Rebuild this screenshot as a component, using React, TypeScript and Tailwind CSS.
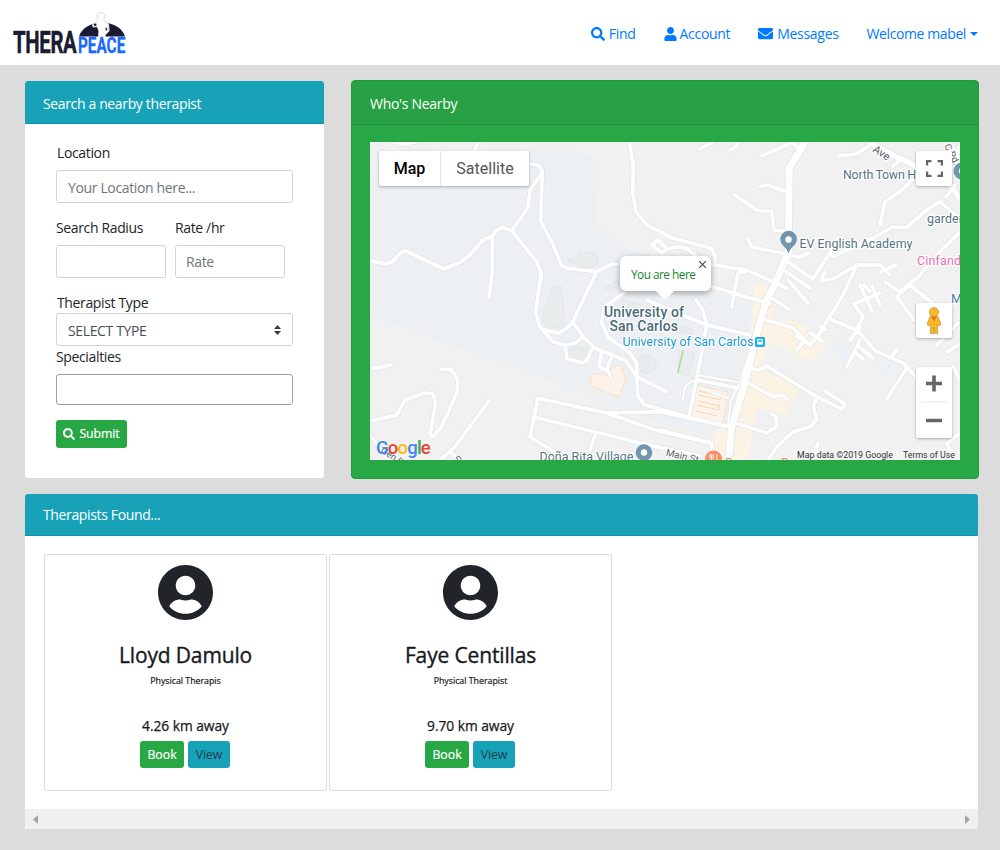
import React from "react";
import { FaSearch, FaUser, FaEnvelope, FaUserCircle } from "react-icons/fa";

const minorRoads = [
  "M370 261 L385 263.7 L391.7 262.3 L401.7 251.7 L405.7 251 L444 269 L460 262.3 L470 255 L482.3 240.7 L492.3 236 L495 231.7 L502.3 227.3 L511.7 230.7 L536.7 261.7 L541.7 275 L539 290",
  "M596.7 271.7 L572.3 322.7 L566.7 328.3 L558.3 333.3 L545 330",
  "M492.3 236 L492.3 272 L489 297",
  "M511.7 230.7 L527.7 208.3 L530 190 L542.3 172.3",
  "M520 163 L538.3 165 L542.3 171 L540.7 221.7 L553.3 245 L561.7 265.7 L566.7 268.3 L596.7 271.7 L611.7 264 L625 265",
  "M541 272 L535.5 313 L540 326.7 L553 341.7 L565 345 L575 343.3 L583 336.7",
  "M572.3 321.7 L583.3 336.7 L595 348.3 L625 360 L636.7 376.7 L666.5 391.7",
  "M629.5 142 L633.3 165 L632.7 193.3 L636 211.7 L646.7 225 L673 238.3 L711.7 248.3 L715 256.7 L715 262",
  "M700 263 L746.7 270 L786.7 288",
  "M746 272 L738 273 L731.7 306.7",
  "M710 286 L733 293 L770 304",
  "M661.7 253 L651.7 245 L658 240 L667 249 L661.7 253",
  "M667 249 L678 246.7 L686 248 L697 257",
  "M700 149 L713 142",
  "M730 150 L737 146 L738 141",
  "M761.7 156 L790 143.3",
  "M792 142 L800 150",
  "M760 186.7 L768 185 L786 191.7",
  "M735 195 L756.7 210 L771.7 211.7 L774 230 L785 231.5",
  "M747.3 238 L751.7 247 L786.7 254 L799 257.5 L808.5 253",
  "M788 261.7 L813 279 L830 253 L833 256.7 L873 238 L893 226.7 L906.7 227.7 L926.7 210 L940 201.7 L962 221",
  "M830 253 L838 238",
  "M838 155.7 L856.7 154 L870 145",
  "M880 225 L885 201.7 L900 191.7 L914 178",
  "M786 271.7 L810 288",
  "M821 281 L825 272",
  "M821 281 L833 279 L856.7 265 L880 265 L890 275",
  "M880 272 L896 265",
  "M864 285 L870 292",
  "M856.7 265 L843 295 L820 333 L810 345 L793 328 L766.7 320",
  "M960 231.7 L936.7 255 L920 275 L900 291.7 L885 282",
  "M796.7 350 L805 340",
  "M810 345 L796 336",
  "M810 333 L822 341",
  "M820 326 L826 330",
  "M831.7 320 L856.7 330 L876.7 351.7 L903 363 L917 378",
  "M906.7 368 L886.7 399",
  "M860 340 L846.7 366.7",
  "M858 346 L873 358",
  "M856 353 L864 360",
  "M890 358 L897 350",
  "M860 328 L850 340",
  "M854 304 L863 316.7 L856 332",
  "M854 304 L880 293",
  "M860 285 L872 311",
  "M872 286 L880 305",
  "M788 280 L808 303",
  "M773 299 L788 309",
  "M750 368 L758 370 L766.7 366 L816.7 396.7 L841.7 409 L845 404 L825 391",
  "M748 383 L773 396.7 L781.7 395 L788 400",
  "M816.7 396.7 L813.5 406.7 L816.7 420 L810 426.7 L793 431.7 L776.7 446.7 L768 460",
  "M738 424 L766.7 433 L776.7 426.7 L776 417 L771.7 414",
  "M818 443 L813 457",
  "M711 460 L712 443 L660 430 M730 427 L660 411.7 L606.7 413",
  "M710 443 L655 430 L606.7 413 L538 398.3 L530 436.7 L538 442 L562 456",
  "M533 416.7 L640 443 L700 456",
  "M595 435 L590 450",
  "M636.7 376.7 L638 396.7 L645 405 L686.7 416.7 L731 427",
  "M696 300 L703 310 L706.7 325 L750 335",
  "M646.7 300 L706.7 325 L697 377 L689 416.7",
  "M697 380 L738 388",
  "M625 292 L604 307 L601.7 323 L608 336.7 L630 353 L636.7 363 L636.7 376.7",
  "M565 345 L567 359 L583 363 L587 360 L591.7 350",
  "M601.7 351.7 L599 366.7 L605 370",
  "M611.7 356.7 L606.7 369 L610.7 376",
  "M370 369 L391 365",
  "M441.7 369 L451.7 370 L458 380 L456.7 393 L441.7 426.7 L433 436.7 L430 434 L435.7 403 L433 394 L425 393 L405 400 L396.7 415 L370 421",
  "M489 400.7 L455 446.7 L440 460",
  "M450 451 L460 462",
  "M370 435 L388 460",
  "M896.7 296.7 L910 285 L936 306",
  "M896.7 296.7 L914 320",
  "M936.7 345 L958 323",
  "M947 352 L962 343",
  "M953 366.7 L962 384",
  "M962 432 L947 443 L951 452",
  "M955 185 L946 197",
  "M893 166 L902 158",
  "M394 142 L403 144 L416 142",
  "M475 150 L478 142",
];

const thinRoads = [
  "M697 380 L692 381 L685 386.7 L682.7 399",
  "M697 375 L737 382",
  "M753 343 L740 382 L731 400 L728 424",
  "M757 343 L744 386",
  "M700 388 L728 398",
];

const majorRoads = [
  "M806 140 L789.3 168.3 L788.3 252 L775 284 L766.7 300 L755 340 L746.7 376.7 L731.7 426.7 L728 465",
];

const midRoads = ["M866 140 L893 155 L917 166.7 L950 185 L962 202", "M962 142 L953 170"];

function MapCanvas() {
  return (
    <svg
      width="590"
      height="318"
      viewBox="370 142 590 318"
      className="block"
      fontFamily="Roboto, sans-serif"
      fill="none"
      strokeLinejoin="round"
      strokeLinecap="round"
    >
      <rect x="370" y="142" width="590" height="318" fill="#f1f1f1" />
      <path
        d="M370 175 L400 150 L563 147 L590 157 L598 167 L597 222 L610 237 L630 250 L655 258 L700 285 L750 310 L757 335 L745 380 L732 425 L712 433 L645 417 L552 381 L370 315 Z"
        fill="#ecf0f3"
      />
      <path d="M835 340 L853 346 L850 360 L832 350Z M880 362 L897 358 L884 380Z" fill="#edf1f5" />
      <path
        d="M755 282 L778 291 L772 318 L798 322 L828 341 L812 362 L770 342 L760 368 L800 388 L785 414 L756 410 L748 460 L712 460 L714 432 L728 424 L742 372 L750 335Z"
        fill="#fbf4e5"
      />
      <g fill="#e9ecec" stroke="#e0e3e3" strokeWidth="0.8">
        <path d="M553 286 L561 286 L564 312 L563 328 L545 326 L542 318Z" />
        <path d="M568 260 L577 257 L579 253 L590 252 L597 256 L599 261 L594 267 L580 266 L579 263 L570 263Z" />
        <path d="M569 349 L577 346 L586 350 L586 359 L577 363 L569 360Z" />
        <path d="M640 357 L648 354 L656 360 L656 369 L648 374 L638 370Z" />
        <path d="M680 350 L695 352 L689 376 L678 373Z" />
        <path d="M605 288 L616 281 L620 284 L611 291Z" />
        <path d="M622 300 L641 305 L638 313 L622 310Z" />
        <path d="M680 326 L693 329 L692 334 L680 332Z" />
      </g>
      <path d="M683 351 L678 372" stroke="#a8dba0" strokeWidth="1.5" />
      <g fill="#fef3ea" stroke="#fbdfc5" strokeWidth="1">
        <path d="M592 374 L606 375 L611 378 L610 369 L620 365 L626 379 L619 397 L590 386Z" />
        <path d="M697 385 L728 392 L723 424 L691 416Z" />
        <path d="M699 391 L722 396 L721 400 L698 395 M698 401 L720 406 L719 410 L697 405 M696 411 L717 416" stroke="#f9d5b3" />
      </g>
      <g stroke="#e4e6e8" strokeWidth="5.2">
        {minorRoads.map((d) => (
          <path key={d} d={d} />
        ))}
      </g>
      <g stroke="#e2e4e6" strokeWidth="3.4">
        {thinRoads.map((d) => (
          <path key={d} d={d} />
        ))}
      </g>
      <g stroke="#e2e4e6" strokeWidth="8.5">
        {majorRoads.map((d) => (
          <path key={d} d={d} />
        ))}
      </g>
      <g stroke="#e2e4e6" strokeWidth="7">
        {midRoads.map((d) => (
          <path key={d} d={d} />
        ))}
      </g>
      <g stroke="#ffffff" strokeWidth="3.6">
        {minorRoads.map((d) => (
          <path key={d} d={d} />
        ))}
      </g>
      <g stroke="#ffffff" strokeWidth="2">
        {thinRoads.map((d) => (
          <path key={d} d={d} />
        ))}
      </g>
      <g stroke="#ffffff" strokeWidth="7">
        {majorRoads.map((d) => (
          <path key={d} d={d} />
        ))}
      </g>
      <g stroke="#ffffff" strokeWidth="5.4">
        {midRoads.map((d) => (
          <path key={d} d={d} />
        ))}
      </g>

      <g stroke="none">
        <g stroke="#ffffff" strokeWidth="2.4" paintOrder="stroke" fill="#55747f" fontSize="12.5">
          <text x="843" y="179" textLength="80">North Town Ho</text>
          <text x="799.5" y="247.5" textLength="113">EV English Academy</text>
          <text x="927" y="223" textLength="45">gardens</text>
          <text x="539.5" y="461" textLength="94">Doña Rita Village</text>
          <text x="917" y="264.5" fill="#e86cb3" textLength="54">Cinfandel</text>
          <text x="951" y="303" fill="#4a7ab5">Me</text>
          <text x="604" y="317" fontSize="14" fontWeight="500" fill="#4a6b79" textLength="80">University of</text>
          <text x="609.5" y="331" fontSize="14" fontWeight="500" fill="#4a6b79" textLength="68.5">San Carlos</text>
          <text x="622.5" y="346" fill="#1b96d2" textLength="131">University of San Carlos</text>
          <text x="725" y="467" fill="#e8865a">Burger</text>
          <text x="781" y="467" fill="#e8865a">B</text>
        </g>
        <g fill="#5c6066" fontSize="10" stroke="#ffffff" strokeWidth="2" paintOrder="stroke">
          <text transform="translate(665.5 455.5) rotate(13)" fontSize="9.8" xmlSpace="preserve">Main St</text>
          <text transform="translate(872 151) rotate(33)" fontSize="11">Ave</text>
          <text transform="translate(865 139) rotate(45)" fontSize="11">n</text>
          <text transform="translate(944 146) rotate(62)" fontSize="9.5">C Pd.</text>
          <text transform="translate(380 452) rotate(33)" fontSize="9.5">Gen Pa</text>
          <text transform="translate(458 462) rotate(-35)" fontSize="9.5">n</text>
        </g>
        <path d="M788.5 254 C787.5 247 780.3 246 780.3 239 A8.3 8.3 0 0 1 796.9 239 C796.9 246 789.5 247 788.5 254Z" fill="#7296ad" />
        <circle cx="788.5" cy="239.5" r="3.2" fill="#ffffff" />
        <circle cx="644" cy="452.5" r="8.3" fill="#7296ad" />
        <circle cx="644" cy="452.5" r="3.2" fill="#ffffff" />
        <circle cx="962" cy="171" r="8.5" fill="#7296ad" />
        <circle cx="962" cy="171" r="3.2" fill="#ffffff" />
        <circle cx="713.5" cy="459" r="8.5" fill="#f9906a" />
        <path d="M710 454.5v4M711.7 454.5v4M713.4 454.5v4M711.7 458v4M717 454.5v8" stroke="#ffffff" strokeWidth="0.9" />
        <rect x="755" y="337" width="10" height="10" rx="1.5" fill="#18b0ee" />
        <path d="M757.2 339h5.6v5.6h-5.6z" fill="#ffffff" />
        <path d="M758 340.2h4v1.6h-4z M757.5 345h1.2v1h-1.2z M761.3 345h1.2v1h-1.2z" fill="#18b0ee" />
        <path d="M792 449 H960 V460 H792Z" fill="#f5f5f5" fillOpacity="0.7" />
      </g>
    </svg>
  );
}

function Logo() {
  return (
    <svg width="120" height="52" viewBox="12 11 120 52" className="block" fontFamily="Roboto, sans-serif" fontWeight="700">
      <path d="M79 36.5 C81 29 90 22.5 102 22.5 C114 22.5 123 29 125 36.5Z" fill="#1b1b31" />
      <path d="M97 21.5 L104 21 L109 24 L109.5 31 L105.5 35 L105.5 39 L98 39 L98.5 31 L97 27 L93 27.5 L92 25Z" fill="#ffffff" />
      <path d="M98.5 20 C96.5 16 97 13 101 12.6 C105.5 12.8 106 17 103 20.5 M98 21.5 C94 22 92 24.5 93 26.5 L97 26 M104.5 21 C108.5 22 109 27 108.5 31" fill="none" stroke="#cfcfd4" strokeWidth="0.8" />
      <circle cx="95.2" cy="24.7" r="1.3" fill="#1b1b31" />
      <path d="M105.5 27 l2 2 l-1.6 2.4z" fill="#1b1b31" />
      <path d="M88 52 l6 1 4-3 M108 39 l12 2 4 4 M112 51 l8 1" fill="none" stroke="#d5d5da" strokeWidth="0.8" />
      <text transform="translate(13 53.3) scale(0.656 1)" fontSize="31" fill="#1b1b31" stroke="#1b1b31" strokeWidth="0.5" textLength="96.8">THERA</text>
      <text transform="translate(78 53.3) scale(0.679 1)" fontSize="22.5" fill="#1769ff" stroke="#1769ff" strokeWidth="0.3" textLength="69.2">PEACE</text>
    </svg>
  );
}

function TherapistCard({ name, role, distance }: { name: string; role: string; distance: string }) {
  return (
    <div className="flex h-[237px] w-[283px] flex-col items-center rounded-[3px] border border-[#dcdcdc] bg-white pt-[9px] text-[#16191c]">
      <FaUserCircle className="h-[57px] w-[55px] text-[#212529]" />
      <div className="mt-[19px] h-[30px] text-[21px] leading-[30px] tracking-[-0.15px] whitespace-nowrap [-webkit-text-stroke:0.35px]">{name}</div>
      <div className="mt-[4px] h-[14px] text-[8.8px] leading-[14px] [-webkit-text-stroke:0.2px]">{role}</div>
      <div className="mt-[28px] h-5 text-[13.8px] leading-5 tracking-[-0.05px] [-webkit-text-stroke:0.25px]">{distance}</div>
      <div className="mt-[5px] mr-px flex gap-1">
        <button className="h-[27px] w-[44px] rounded-[3px] bg-[#28a745] text-[12.3px] leading-[27px] text-white [-webkit-text-stroke:0.2px]">Book</button>
        <button className="h-[27px] w-[42px] rounded-[3px] bg-[#17a2b8] text-[12.3px] leading-[27px] tracking-[-0.1px] text-[#1f3d50]">View</button>
      </div>
    </div>
  );
}

export default function App() {
  return (
    <div className="h-[850px] w-[1000px] overflow-hidden bg-[#dcdcdc] font-['Open_Sans','Noto_Sans',sans-serif] text-[14px] tracking-[-0.36px] text-[#212529]">
      <nav className="flex h-[65px] justify-between bg-white pt-[11px] pr-[22px] pl-3">
        <Logo />
        <div className="flex h-[45px] items-center text-[14px] tracking-[-0.3px] text-[#007bff]">
          <a className="mr-7 flex items-center gap-1">
            <FaSearch className="size-[14px]" />
            <span>Find</span>
          </a>
          <a className="mr-7 flex items-center gap-[3px]">
            <FaUser className="h-[14px] w-[13px]" />
            <span>Account</span>
          </a>
          <a className="mr-7 flex items-center gap-1">
            <FaEnvelope className="size-[15px]" />
            <span>Messages</span>
          </a>
          <a className="flex items-center gap-1">
            <span className="tracking-[-0.4px]">Welcome mabel</span>
            <svg width="8" height="4" viewBox="0 0 8 4"><path d="M0 0H8L4 4Z" fill="currentColor" /></svg>
          </a>
        </div>
      </nav>

      <div className="flex items-start pt-[15px] pl-[25px]">
        <section className="mt-px h-[397px] w-[299px] overflow-hidden rounded-[3px] bg-white">
          <header className="h-[43px] border-b border-[#1391a5] bg-[#17a2b8] pl-[18px] leading-[45px] text-white">Search a nearby therapist</header>
          <form className="pl-[31px]">
            <label className="mt-[19px] block h-5 pl-px leading-5">Location</label>
            <input placeholder="Your Location here..." className="mt-[7px] block h-[33px] w-[237px] rounded-[3px] border border-[#ced4da] px-[11px] pt-px placeholder:text-[#6c757d]" />
            <div className="mt-[15px] flex gap-[9px]">
              <div>
                <label className="block h-5 leading-5">Search Radius</label>
                <input className="mt-[7px] block h-[33px] w-[110px] rounded-[3px] border border-[#ced4da] px-2.5" />
              </div>
              <div>
                <label className="block h-5 leading-5">Rate /hr</label>
                <input placeholder="Rate" className="mt-[7px] block h-[33px] w-[110px] rounded-[3px] border border-[#ced4da] px-2.5 placeholder:text-[#6c757d]" />
              </div>
            </div>
            <label className="mt-[15px] block h-5 pl-px leading-5">Therapist Type</label>
            <div className="flex h-[33px] w-[237px] items-center justify-between rounded-[3px] border border-[#ced4da] pr-[11px] pl-[11px] text-[#495057]">
              <span className="pt-px">SELECT TYPE</span>
              <svg width="7" height="10" viewBox="0 0 7 10"><path d="M0 4L3.5 0L7 4ZM0 6L3.5 10L7 6Z" fill="#343a40" /></svg>
            </div>
            <label className="mt-px block h-5 leading-5">Specialties</label>
            <input className="mt-[7px] block h-[31px] w-[237px] rounded-[3px] border border-[#a0a0a0]" />
            <button type="button" className="mt-[15px] flex h-[28px] w-[71px] items-center justify-center gap-1 rounded-[3px] bg-[#28a745] text-[12.3px] tracking-[-0.1px] text-white [-webkit-text-stroke:0.2px]">
              <FaSearch className="size-3" />
              <span className="pt-px">Submit</span>
            </button>
          </form>
        </section>

        <section className="ml-[27px] h-[399px] w-[628px] overflow-hidden rounded-[4px] border border-[#209a3d] bg-[#28a745]">
          <header className="h-[44px] border-b border-[#229040] bg-[#27a143] pl-[18px] leading-[45px] tracking-[-0.3px] text-white">Who's Nearby</header>
          <div className="relative mt-[17px] ml-[18px] h-[318px] w-[590px] overflow-hidden font-['Roboto',sans-serif] tracking-normal">
            <MapCanvas />
            <div className="absolute top-[9px] left-[9px] flex h-[35px] rounded-[2px] bg-white text-[16px] leading-[36px] shadow-[0_1px_3px_rgba(0,0,0,0.3)]">
              <div className="w-[62px] border-r border-[#e6e6e6] text-center font-medium text-black">Map</div>
              <div className="w-[88px] text-center text-[#565656]">Satellite</div>
            </div>
            <div className="absolute top-[114px] left-[250px] h-[35px] w-[91px] rounded-[6px] bg-white pl-[11px] text-[12px] leading-[36px] text-[#17862b] shadow-[0_2px_6px_rgba(0,0,0,0.35)]">
              <span className="font-['Open_Sans',sans-serif] text-[11.8px] tracking-[-0.5px]">You are here</span>
              <svg className="absolute top-[5px] right-[5px]" width="7" height="7" viewBox="0 0 7 7"><path d="M0 0L7 7M7 0L0 7" stroke="#444" strokeWidth="1.1" /></svg>
              <svg className="absolute top-[34px] left-[35px]" width="20" height="10" viewBox="0 0 20 10"><path d="M0 0H20L10 10Z" fill="#fff" /></svg>
            </div>
            <div className="absolute top-[9px] right-[8px] flex h-[35px] w-9 items-center justify-center rounded-[2px] bg-white shadow-[0_1px_3px_rgba(0,0,0,0.3)]">
              <svg width="17" height="17" viewBox="0 0 17 17"><path d="M1.1 5.5V1.1H5.5M11.5 1.1H15.9V5.5M15.9 11.5V15.9H11.5M5.5 15.9H1.1V11.5" fill="none" stroke="#666" strokeWidth="2.2" /></svg>
            </div>
            <div className="absolute top-[161px] right-[8px] flex h-[35px] w-9 items-center justify-center rounded-[2px] bg-white shadow-[0_1px_3px_rgba(0,0,0,0.3)]">
              <svg width="16" height="28" viewBox="0 0 16 28">
                <path d="M4 9.5H12L15 17L13.5 19L11.5 17.5L11.8 26.5H8.5L8 20L7.5 26.5H4.2L4.5 17.5L2.5 19L1 17Z" fill="#fbb829" stroke="#b9882d" strokeWidth="0.6" />
                <circle cx="8" cy="5.2" r="4.6" fill="#fbb829" stroke="#b9882d" strokeWidth="0.6" />
                <path d="M5 9.8H11L8 14.5Z" fill="#e57a25" />
              </svg>
            </div>
            <div className="absolute top-[225px] right-[8px] flex h-[71px] w-9 flex-col items-center rounded-[2px] bg-white shadow-[0_1px_3px_rgba(0,0,0,0.3)]">
              <svg width="36" height="71" viewBox="0 0 36 71">
                <path d="M10 16.5H26M18 8.5V24.5M10 53.5H26" stroke="#666" strokeWidth="3.6" />
                <path d="M5 35H31" stroke="#e6e6e6" strokeWidth="1" />
              </svg>
            </div>
            <div className="absolute right-[5px] bottom-0 flex h-[11px] gap-[10px] text-[8.8px] leading-[12px] whitespace-nowrap text-[#333]">
              <span>Map data ©2019 Google</span>
              <span>Terms of Use</span>
            </div>
            <div className="absolute bottom-[1px] left-[6px] text-[18.5px] leading-[22px] font-medium tracking-[-0.8px]">
              <span className="text-[#4285f4]">G</span>
              <span className="text-[#ea4335]">o</span>
              <span className="text-[#fbbc05]">o</span>
              <span className="text-[#4285f4]">g</span>
              <span className="text-[#34a853]">l</span>
              <span className="text-[#ea4335]">e</span>
            </div>
          </div>
        </section>
      </div>

      <section className="mt-[15px] ml-[25px] flex h-[335px] w-[953px] flex-col overflow-hidden rounded-t-[3px] bg-white">
        <header className="h-[42px] shrink-0 border-b border-[#1391a5] bg-[#17a2b8] pl-[18px] leading-[42px] text-white">Therapists Found...</header>
        <div className="flex flex-1 gap-[2px] pt-[18px] pl-[19px] tracking-normal">
          <TherapistCard name="Lloyd Damulo" role="Physical Therapis" distance="4.26 km away" />
          <TherapistCard name="Faye Centillas" role="Physical Therapist" distance="9.70 km away" />
        </div>
        <div className="flex h-5 shrink-0 items-center justify-between bg-[#f0f0f0] px-[8px]">
          <svg width="5" height="9" viewBox="0 0 5 9"><path d="M5 0V9L0 4.5Z" fill="#a3a3a3" /></svg>
          <svg width="5" height="9" viewBox="0 0 5 9"><path d="M0 0V9L5 4.5Z" fill="#a3a3a3" /></svg>
        </div>
      </section>
    </div>
  );
}
